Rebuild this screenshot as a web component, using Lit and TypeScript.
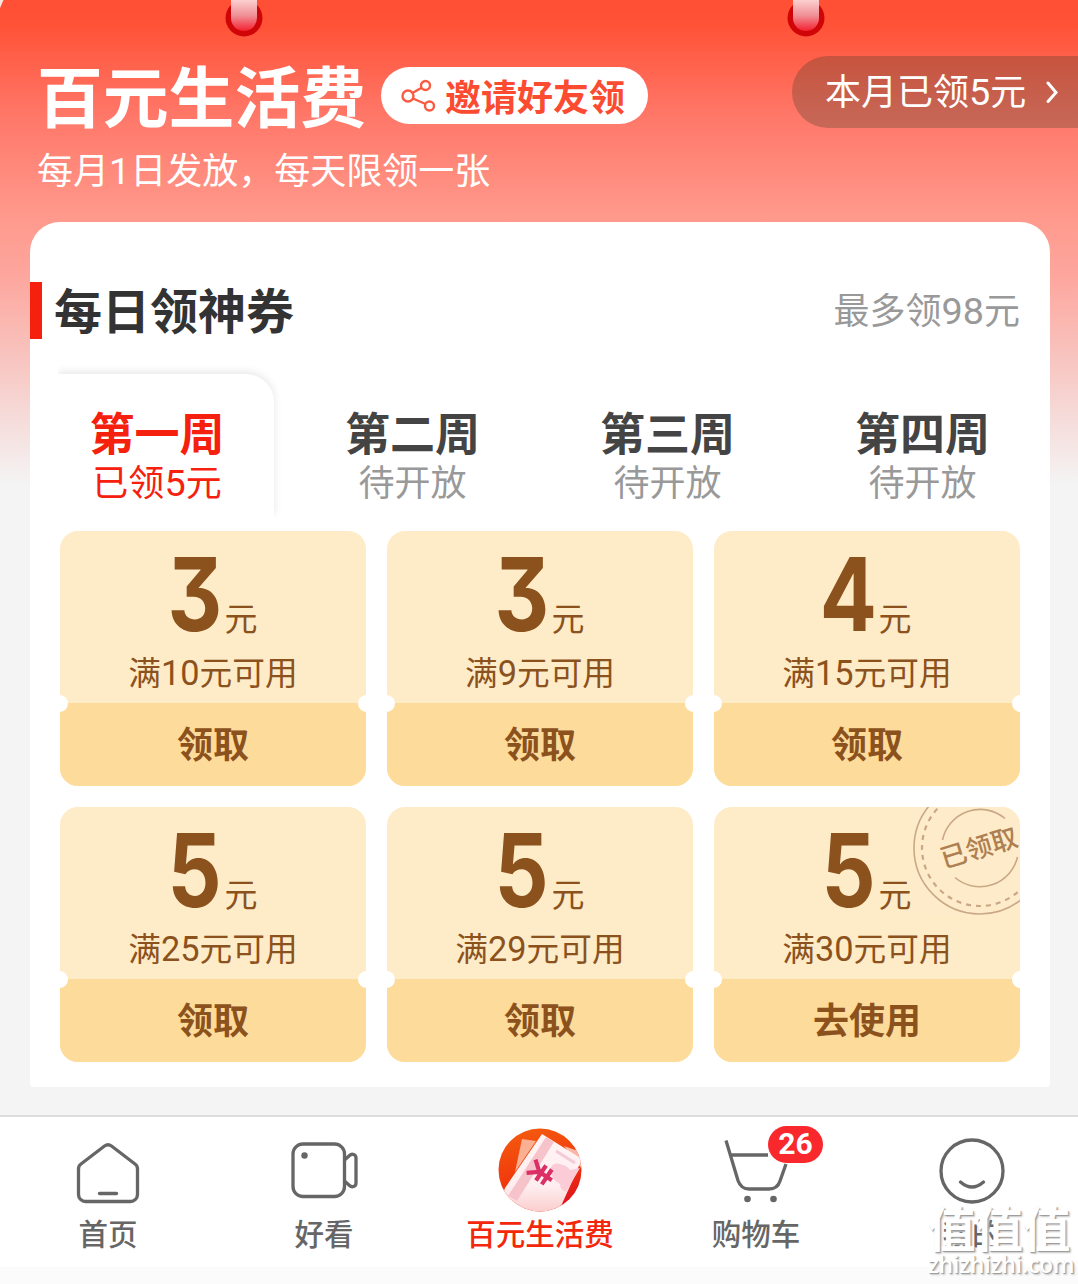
import { LitElement, html, svg, css, nothing } from 'lit';
import { customElement, property } from 'lit/decorators.js';

interface Coupon {
  amount: number;
  limit: number;
  action: string;
  claimed?: boolean;
}

const coupons: Coupon[] = [
  { amount: 3, limit: 10, action: '领取' },
  { amount: 3, limit: 9, action: '领取' },
  { amount: 4, limit: 15, action: '领取' },
  { amount: 5, limit: 25, action: '领取' },
  { amount: 5, limit: 29, action: '领取' },
  { amount: 5, limit: 30, action: '去使用', claimed: true },
];

const weeks = [
  { name: '第一周', note: '已领5元', active: true },
  { name: '第二周', note: '待开放' },
  { name: '第三周', note: '待开放' },
  { name: '第四周', note: '待开放' },
];

// digits are set in a latin face, slightly larger than the chinese text
const mixed = (text: string) =>
  text
    .split(/(\d+)/)
    .filter((part) => part)
    .map((part) => (/\d/.test(part) ? html`<span class="num">${part}</span>` : part));

const numStyles = css`
  .num {
    font-family: Roboto, sans-serif;
    font-size: 1.05em;
    line-height: 0;
  }
`;

@customElement('coupon-card')
export class CouponCard extends LitElement {
  @property({ attribute: false }) coupon!: Coupon;

  static styles = [
    numStyles,
    css`
      :host {
        display: block;
      }
      .card {
        position: relative;
        height: 255px;
        border-radius: 18px;
        overflow: hidden;
        background: #feecc9;
        color: #8c521d;
        text-align: center;
      }
      .top {
        height: 172px;
        box-sizing: border-box;
        padding-top: 16px;
      }
      .amount {
        display: flex;
        justify-content: center;
        align-items: baseline;
        height: 100px;
        line-height: 94px;
        gap: 4px;
      }
      .value {
        font-family: Inter, sans-serif;
        font-feature-settings: 'cv09' 1;
        font-size: 102px;
        font-weight: 700;
        width: 52px;
        display: flex;
        justify-content: center;
      }
      .value span {
        transform: scaleX(0.83);
      }
      .unit {
        font-size: 33px;
      }
      .limit {
        font-size: 32.700px;
        line-height: 48px;
      }
      .action {
        height: 83px;
        line-height: 79px;
        background: #fddb9b;
        font-size: 36px;
        font-weight: 700;
      }
      .notch {
        position: absolute;
        top: 164px;
        left: -9px;
        width: 17px;
        height: 17px;
        border-radius: 50%;
        background: #fff;
      }
      .notch.right {
        left: auto;
        right: -9px;
      }
      .stamp {
        position: absolute;
        left: 198px;
        top: -27px;
        width: 136px;
        height: 136px;
        opacity: 0.7;
      }
    `,
  ];

  render() {
    const { amount, limit, action, claimed } = this.coupon;
    return html`
      <div class="card">
        <div class="top">
          <div class="amount">
            <div class="value"><span>${amount}</span></div>
            <div class="unit">元</div>
          </div>
          <div class="limit">${mixed(`满${limit}元可用`)}</div>
        </div>
        <div class="action">${action}</div>
        <div class="notch"></div>
        <div class="notch right"></div>
        ${claimed
          ? html`<svg class="stamp" viewBox="-68 -68 136 136" fill="none" stroke="#b48c69" stroke-width="1.6">
              <circle r="66" />
              <circle r="58" stroke-width="2.2" stroke-dasharray="5 5" />
              <path d="M-37.500 -8A38.500 38.500 0 0 1 25 -29.500" />
              <path d="M37.500 9A38.500 38.500 0 0 1 -25 29.500" />
              <text x="-1" y="9" transform="rotate(-17)" text-anchor="middle" font-size="26.500" font-weight="500" fill="#8c521d" stroke="none">已领取</text>
            </svg>`
          : nothing}
      </div>
    `;
  }
}

const homeIcon = svg`
  <path d="M28.500 3a6 6 0 0 1 7 0l23.500 18a6 6 0 0 1 2.500 5V51.500a7 7 0 0 1-7 7H9.500a7 7 0 0 1-7-7V26a6 6 0 0 1 2.500-5z" />
  <path d="M23.500 50.500h17" stroke-linecap="round" />`;

const videoIcon = svg`
  <rect x="1" y="2" width="51.500" height="52.500" rx="10" />
  <circle cx="12.500" cy="13.500" r="3.200" fill="#666" stroke="none" />
  <path d="M52.500 18l5-4.500c2.500-2.500 6.500-1 6.500 2.500v25c0 3.500-4 5-6.500 2.500l-5-4.500" />`;

const cartIcon = svg`
  <path d="M2 1.500l12 40q3 8.500 11 8.500h20q8.500 0 11-8l6-17M7.500 16h36.500" />
  <circle cx="23.500" cy="60" r="3.300" fill="#666" stroke="none" />
  <circle cx="49.500" cy="60" r="3.300" fill="#666" stroke="none" />`;

const faceIcon = svg`
  <circle cx="32" cy="32" r="31" />
  <path d="M20.500 43q11.500 10 23 0" stroke-linecap="round" />`;

@customElement('tab-bar')
export class TabBar extends LitElement {
  static styles = css`
    :host {
      display: block;
    }
    .bar {
      height: 150px;
      display: grid;
      grid-template-columns: repeat(5, 216px);
      background: #fff;
      border-top: 2px solid #dcdcdc;
      border-bottom: 17px solid #fbfbfb;
      color: #666;
      font-size: 29.500px;
      font-weight: 500;
    }
    .item {
      position: relative;
      display: flex;
      flex-direction: column;
      align-items: center;
    }
    .icon {
      height: 95px;
      box-sizing: border-box;
      padding-top: 12px;
      display: flex;
      align-items: center;
    }
    .icon svg {
      display: block;
      overflow: visible;
      fill: none;
      stroke: #666;
      stroke-width: 3.300;
    }
    .label {
      line-height: 40px;
    }
    .item.active {
      color: #f2270c;
    }
    .icon .coin {
      stroke: none;
    }
    .badge {
      position: absolute;
      left: 120px;
      top: 9px;
      width: 55px;
      height: 37px;
      border-radius: 19px;
      background: #f8282d;
      color: #fff;
      font: 700 30px/36px Roboto, sans-serif;
      text-align: center;
    }
  `;

  render() {
    return html`
      <nav class="bar">
        <div class="item">
          <div class="icon"><svg width="64" height="64" viewBox="0 -4 64 64">${homeIcon}</svg></div>
          <div class="label">首页</div>
        </div>
        <div class="item">
          <div class="icon"><svg width="64" height="58" viewBox="0 0 64 58">${videoIcon}</svg></div>
          <div class="label">好看</div>
        </div>
        <div class="item active">
          <div class="icon">
            <svg class="coin" width="84" height="84" viewBox="0 1 84 84">
              <defs>
                <linearGradient id="disc" x1="0" y1="0" x2="0.300" y2="1">
                  <stop offset="0" stop-color="#f4600f" />
                  <stop offset="0.600" stop-color="#f23a0c" />
                  <stop offset="1" stop-color="#e0181c" />
                </linearGradient>
                <linearGradient id="paper" x1="0" y1="0" x2="0" y2="1">
                  <stop offset="0" stop-color="#fff4f5" />
                  <stop offset="0.600" stop-color="#ffeef0" />
                  <stop offset="1" stop-color="#fac4c2" />
                </linearGradient>
                <clipPath id="round"><circle cx="42" cy="42" r="41.500" /></clipPath>
              </defs>
              <g clip-path="url(#round)">
                <rect width="84" height="84" fill="url(#disc)" />
                <path d="M24 11l14 2L17 44z" fill="#fbb093" />
                <path d="M66 18l17 6v16z" fill="#f9b7a4" />
                <path d="M44 6L84 31L64 76L50 92L0 78L7 60z" fill="url(#paper)" />
                <path d="M48 9l8 5L19 73l-9-5z" fill="#f7c3cb" />
                <path d="M52 42q2-8 10-6t10 6l10-2L68 64q-6-2-6-8-8-4-10-14z" fill="#fbccd7" />
                <path d="M58 23l19 12" stroke="#f3cbd6" stroke-width="3" />
                <g transform="translate(43 45) rotate(-56)" stroke="#dc2f66" stroke-width="4.200">
                  <path d="M-8-12L0-2L8-12M0-3V13M-9 0H9M-9 7H9" />
                </g>
              </g>
            </svg>
          </div>
          <div class="label">百元生活费</div>
        </div>
        <div class="item">
          <div class="icon"><svg width="64" height="64" viewBox="0 0 64 64">${cartIcon}</svg></div>
          <div class="label">购物车</div>
          <div class="badge">26</div>
        </div>
        <div class="item">
          <div class="icon"><svg width="64" height="64" viewBox="0 0 64 64">${faceIcon}</svg></div>
          <div class="label">我的</div>
        </div>
      </nav>
    `;
  }
}

@customElement('app-root')
export class AppRoot extends LitElement {
  static styles = [
    numStyles,
    css`
      :host {
        display: block;
        font-family: 'Noto Sans CJK SC', sans-serif;
        white-space: nowrap;
      }
      .page {
        position: relative;
        width: 1078px;
        height: 1284px;
        overflow: hidden;
        display: flex;
        flex-direction: column;
        background: #f4f4f4;
      }
      .backdrop {
        height: 1115px;
        flex: none;
        background: linear-gradient(
          #ff4f34 0,
          #ff5237 25px,
          #ff7768 115px,
          #ff998c 215px,
          #fda69d 275px,
          #f8c5c0 360px,
          #f5e0de 430px,
          #f4f4f4 485px
        );
      }
      .header {
        position: relative;
        height: 222px;
        box-sizing: border-box;
        padding: 56px 0 0 37px;
        color: #fff;
        display: flex;
        justify-content: space-between;
        align-items: flex-start;
      }
      .corner {
        position: absolute;
        top: 0;
        left: 0;
      }
      .peg {
        position: absolute;
        top: 0;
        left: 225px;
      }
      .peg.second {
        left: 787px;
      }
      .title-row {
        display: flex;
        align-items: center;
        gap: 15px;
        height: 79px;
        font-size: 65.800px;
        line-height: 72px;
        font-weight: 700;
      }
      .title {
        padding-bottom: 4px;
      }
      .invite {
        display: flex;
        align-items: center;
        gap: 9px;
        width: 267px;
        height: 57px;
        box-sizing: border-box;
        padding: 0 0 2px 20px;
        border-radius: 29px;
        background: #fff;
        color: #fb4b31;
        font-size: 36px;
      }
      .subtitle {
        font-size: 36px;
        line-height: 66px;
      }
      .received {
        display: flex;
        align-items: center;
        gap: 20px;
        width: 286px;
        height: 72px;
        box-sizing: border-box;
        padding-left: 33px;
        border-radius: 36px 0 0 36px;
        background: rgba(70, 60, 40, 0.3);
        font-size: 36px;
      }
      .received span {
        line-height: 68px;
      }
      .received > span {
        padding-bottom: 4px;
      }
      .panel {
        width: 1020px;
        height: 865px;
        margin-left: 30px;
        border-radius: 30px 30px 4px 4px;
        background: #fff;
        box-sizing: border-box;
        padding-top: 60px;
      }
      .panel-head {
        display: flex;
        align-items: center;
        justify-content: space-between;
        height: 57px;
        padding-right: 30px;
        border-left: 12px solid #f5200e;
      }
      .panel-title {
        padding: 0 0 4px 12px;
        font-size: 48px;
        line-height: 53px;
        font-weight: 700;
        color: #333;
      }
      .panel-note {
        padding-bottom: 6px;
        font-size: 36px;
        color: #999;
      }
      .weeks {
        display: grid;
        grid-template-columns: repeat(4, 255px);
        margin-top: 25px;
        height: 167px;
      }
      .week {
        padding-top: 43px;
        text-align: center;
        font-size: 36px;
        line-height: 46px;
        color: #999;
      }
      .week-name {
        font-size: 45px;
        line-height: 50px;
        font-weight: 700;
        color: #444;
      }
      .week.active,
      .week.active .week-name {
        color: #f5200e;
      }
      .week.active {
        margin: 10px 11px 14px 28px;
        padding: 33px 18px 0 0;
        border-radius: 0 28px 0 0;
        box-shadow: 0 -2px 8px rgba(0, 0, 0, 0.1);
        clip-path: inset(-12px -10px 0 0);
      }
      .coupons {
        display: grid;
        grid-template-columns: repeat(3, 306px);
        gap: 21px;
        padding-left: 30px;
      }
      .watermark {
        position: absolute;
        left: 928px;
        top: 1200px;
        color: #fff;
        font-size: 47.500px;
        font-weight: 700;
        line-height: 54px;
        text-shadow: 1px 1px 1px #999, 2px 2px 2px #ccc;
      }
      .watermark-site {
        font-family: 'Open Sans', sans-serif;
        font-size: 22.500px;
        line-height: 22px;
        font-weight: 600;
      }
    `,
  ];

  private renderPeg(second = false) {
    return html`
      <svg class="peg ${second ? 'second' : ''}" width="38" height="37" viewBox="0 0 38 37">
        <defs>
          <linearGradient id="peg" x1="0" y1="0" x2="0" y2="1">
            <stop offset="0" stop-color="#fbd0d0" />
            <stop offset="0.500" stop-color="#f08f96" />
            <stop offset="1" stop-color="#f52030" />
          </linearGradient>
        </defs>
        <circle cx="19" cy="18" r="18.500" fill="#cf0508" />
        <path d="M6 0h26v18a13 13 0 0 1-26 0z" fill="url(#peg)" />
      </svg>
    `;
  }

  render() {
    return html`
      <div class="page">
        <div class="backdrop">
          <div class="header">
            <svg class="corner" width="4" height="9" viewBox="0 0 4 9"><path d="M0 0h3.500L0 8z" fill="#fbe4e0" /></svg>
            ${this.renderPeg()} ${this.renderPeg(true)}
            <div>
              <div class="title-row">
                <span class="title">百元生活费</span>
                <div class="invite">
                  <svg width="35" height="34" viewBox="0 -1 35 34" fill="none" stroke="#fb5a42" stroke-width="2.4">
                    <circle cx="7" cy="17" r="5.500" />
                    <circle cx="24.500" cy="6.500" r="4.500" />
                    <circle cx="28.500" cy="27" r="4.500" />
                    <path d="M11.500 14l9.500-5.500M12 19.500l12.500 5.500" />
                  </svg>
                  <span>邀请好友领</span>
                </div>
              </div>
              <div class="subtitle">${mixed('每月1日发放，每天限领一张')}</div>
            </div>
            <div class="received">
              <span>${mixed('本月已领5元')}</span>
              <svg width="14" height="22" viewBox="0 0 14 22" fill="none" stroke="#fff" stroke-width="3" stroke-linecap="round">
                <path d="M2 2l8 9.500-8 9" />
              </svg>
            </div>
          </div>
          <div class="panel">
            <div class="panel-head">
              <div class="panel-title">每日领神券</div>
              <div class="panel-note">${mixed('最多领98元')}</div>
            </div>
            <div class="weeks">
              ${weeks.map(
                (week) => html`
                  <div class="week ${week.active ? 'active' : ''}">
                    <div class="week-name">${week.name}</div>
                    <div>${mixed(week.note)}</div>
                  </div>
                `
              )}
            </div>
            <div class="coupons">
              ${coupons.map((coupon) => html`<coupon-card .coupon=${coupon}></coupon-card>`)}
            </div>
          </div>
        </div>
        <tab-bar></tab-bar>
        <div class="watermark">
          <div>值值值</div>
          <div class="watermark-site">zhizhizhi.com</div>
        </div>
      </div>
    `;
  }
}
